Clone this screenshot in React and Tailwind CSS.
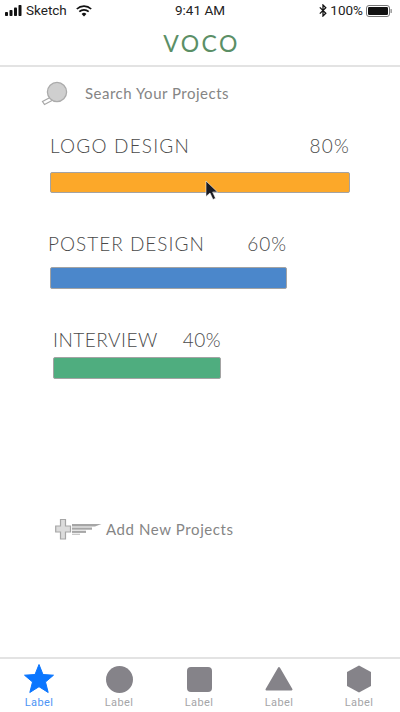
import React from "react";

function Cellular() {
  return (
    <svg width="17" height="11" viewBox="0 0 17 11" fill="#111">
      <rect x="0" y="7" width="3" height="4" rx="0.8" />
      <rect x="4.5" y="5" width="3" height="6" rx="0.8" />
      <rect x="9" y="2.5" width="3" height="8.5" rx="0.8" />
      <rect x="13.5" y="0" width="3" height="11" rx="0.8" />
    </svg>
  );
}

function Wifi() {
  return (
    <svg width="16" height="12" viewBox="0 0 16 12" fill="none" stroke="#111" strokeWidth="1.7">
      <path d="M0.8 4 A10.5 10.5 0 0 1 15.2 4" />
      <path d="M3.3 6.6 A7 7 0 0 1 12.7 6.6" />
      <path d="M8 11.6 L5.6 9 A3.5 3.5 0 0 1 10.4 9 Z" fill="#111" stroke="none" />
    </svg>
  );
}

function Bluetooth() {
  return (
    <svg width="8" height="13" viewBox="0 0 8 13" fill="none" stroke="#111" strokeWidth="1.3">
      <path d="M0.8 3.4 L6.8 9.2 L4 12 L4 1 L6.8 3.8 L0.8 9.6" />
    </svg>
  );
}

function Battery() {
  return (
    <svg width="26" height="12" viewBox="0 0 26 12">
      <rect x="0.5" y="0.5" width="23" height="11" rx="2.5" fill="none" stroke="#777" />
      <rect x="2" y="2" width="20" height="8" rx="1.2" fill="#111" />
      <rect x="24.5" y="4" width="1.3" height="4" rx="0.6" fill="#888" />
    </svg>
  );
}

function SearchGlyph() {
  return (
    <svg width="28" height="26" viewBox="0 0 28 26">
      <path d="M11 17 L2.5 21.5 L4.5 24.5 L13 20" fill="#fff" stroke="#a8a8a8" strokeWidth="1.2" />
      <circle cx="17" cy="12" r="9.6" fill="#cfcfcf" stroke="#ababab" strokeWidth="1.3" />
    </svg>
  );
}

function AddGlyph() {
  return (
    <svg width="47" height="22" viewBox="0 0 47 22">
      <path d="M5.5 1.5 H10.5 V8 H15.5 V14 H10.5 V21 H5.5 V14 H0.7 V8 H5.5 Z" fill="#dcdcdc" stroke="#a6a6a6" strokeWidth="1.2" />
      <path d="M17 6 H46.5 L40 8.5 H17 Z" fill="#a6a6a6" />
      <rect x="17" y="9.5" width="20" height="2.2" fill="#a6a6a6" />
      <rect x="17" y="12.7" width="14" height="2.2" fill="#a6a6a6" />
      <rect x="17" y="15.7" width="8" height="1.2" fill="#c4c4c4" />
    </svg>
  );
}

function Pointer() {
  return (
    <svg width="16" height="24" viewBox="0 0 16 24">
      <path d="M2 3 L2 18.5 L6 15 L9 21.5 L11.5 20.2 L8.6 14 L13.5 14 Z" fill="#1b1b22" stroke="#ffffff" strokeOpacity="0.55" strokeWidth="1" />
    </svg>
  );
}

function Tab({ label, active, children }) {
  return (
    <div className="flex w-[80px] shrink-0 flex-col items-center pt-[4px]">
      <div className="flex h-[32px] w-[32px] items-center justify-center">{children}</div>
      <span className={`mt-[2px] font-['Roboto',sans-serif] text-[11px] leading-[12px] tracking-[0.4px] ${active ? "text-[#4d94f5]" : "text-[#a5a5a8]"}`}>{label}</span>
    </div>
  );
}

export default function App() {
  return (
    <div className="relative flex h-[712px] w-[400px] flex-col overflow-hidden bg-white font-['Lato','Open_Sans',sans-serif]">
      <div className="relative flex h-[20px] items-center justify-between pl-[5px] pr-[8px] pt-[1px] font-['Roboto',sans-serif] text-[13.5px] text-[#222222]">
        <div className="flex items-center gap-[4px]">
          <Cellular />
          <span>Sketch</span>
          <span className="ml-[5px]"><Wifi /></span>
        </div>
        <span className="absolute left-0 right-0 text-center">9:41 AM</span>
        <div className="flex items-center gap-[3px]">
          <Bluetooth />
          <span>100%</span>
          <Battery />
        </div>
      </div>

      <div className="flex h-[47px] items-center justify-center border-b-2 border-[#e3e3e3] pt-[1px]">
        <span className="pl-[3px] text-[23px] leading-[28px] tracking-[2.4px] text-[#5b8f66]">VOCO</span>
      </div>

      <div className="ml-[40px] mt-[12px] flex h-[28px] items-center">
        <SearchGlyph />
        <span className="ml-[17px] text-[15px] leading-[20px] tracking-[0.5px] text-[#858585]">Search Your Projects</span>
      </div>

      <div className="ml-[50px] mt-[27px] w-[300px]">
        <div className="flex justify-between text-[19px] font-light leading-[24px] tracking-[1.2px] text-[#4a4a4a]">
          <span>LOGO DESIGN</span>
          <span>80%</span>
        </div>
        <div className="relative mt-[14px] h-[21px] rounded-[2px] border border-[#a3a3a3] bg-[#fca829]">
          <span className="absolute left-[153px] top-[5px]"><Pointer /></span>
        </div>
      </div>

      <div className="ml-[48px] mt-[39px] w-[239px]">
        <div className="flex justify-between text-[19px] font-light leading-[24px] tracking-[1px] text-[#4a4a4a]">
          <span>POSTER DESIGN</span>
          <span>60%</span>
        </div>
        <div className="ml-[2px] mt-[11px] h-[22px] rounded-[2px] border border-[#a3a3a3] bg-[#4b87cb]" />
      </div>

      <div className="ml-[53px] mt-[39px] w-[168px]">
        <div className="flex justify-between text-[19px] font-light leading-[24px] tracking-[0.5px] text-[#4a4a4a]">
          <span>INTERVIEW</span>
          <span>40%</span>
        </div>
        <div className="mt-[5px] h-[22px] rounded-[2px] border border-[#a3a3a3] bg-[#4fad7f]" />
      </div>

      <div className="ml-[55px] mt-[136px] flex h-[28px] items-center">
        <AddGlyph />
        <span className="ml-[4px] text-[15px] leading-[20px] tracking-[0.6px] text-[#858585]">Add New Projects</span>
      </div>

      <div className="mt-auto h-[55px] border-t-2 border-[#e3e3e3]">
        <div className="-ml-[1px] flex w-[400px]">
          <Tab label="Label" active>
            <svg width="30" height="30" viewBox="0 0 30 30"><path d="M15 0.5 L19 10.5 L29.5 11.2 L21.5 18 L24.2 28.5 L15 22.7 L5.8 28.5 L8.5 18 L0.5 11.2 L11 10.5 Z" fill="#0a76ff" stroke="#0a76ff" strokeLinejoin="round" /></svg>
          </Tab>
          <Tab label="Label">
            <div className="h-[27px] w-[27px] rounded-full bg-[#858389]" />
          </Tab>
          <Tab label="Label">
            <div className="h-[25px] w-[25px] rounded-[4px] bg-[#858389]" />
          </Tab>
          <Tab label="Label">
            <svg width="28" height="26" viewBox="0 0 28 26"><path d="M14 2 L26.5 23.5 H1.5 Z" fill="#858389" stroke="#858389" strokeWidth="2" strokeLinejoin="round" /></svg>
          </Tab>
          <Tab label="Label">
            <svg width="26" height="28" viewBox="0 0 26 28"><path d="M13 0.5 L25 7 V21 L13 27.5 L1 21 V7 Z" fill="#858389" /></svg>
          </Tab>
        </div>
      </div>
    </div>
  );
}
